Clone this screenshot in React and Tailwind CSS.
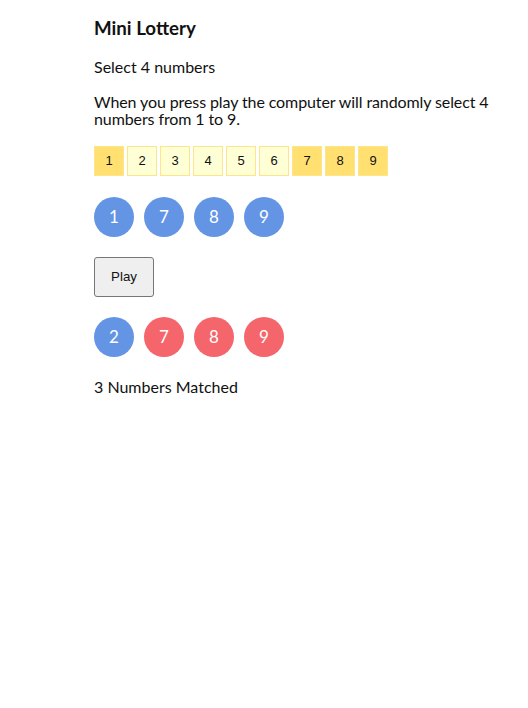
import React, { useState } from 'react';

const picked = [1, 7, 8, 9];
const drawn = [2, 7, 8, 9];

export default function App() {
  const [selected] = useState(picked);

  return (
    <div className="min-h-[708px] bg-white text-[#111] font-['Lato','Noto_Sans',sans-serif]">
      <div className="ml-[94px] w-[420px] pt-[17px]">
        <h1 className="text-[18.72px] font-bold leading-[22px]">Mini Lottery</h1>
        <p className="mt-[19px] text-base leading-[18px]">Select 4 numbers</p>
        <p className="mt-[17px] text-base leading-[17px] tracking-[-0.1px]">
          When you press play the computer will randomly select 4 numbers from 1 to 9.
        </p>

        {/* Number picker */}
        <div className="mt-[19px] flex gap-[3px]">
          {[1, 2, 3, 4, 5, 6, 7, 8, 9].map(n => (
            <button
              key={n}
              className={`w-[30px] h-[30px] border border-[#ffe58a] flex items-center justify-center text-[13px] font-['Liberation_Sans',Arial,sans-serif] text-[#111] ${
                selected.includes(n) ? 'bg-[#ffe070]' : 'bg-[#ffffd6]'
              }`}
            >
              {n}
            </button>
          ))}
        </div>

        {/* Chosen */}
        <div className="mt-[21px] flex gap-[10px]">
          {selected.map(n => (
            <div key={n} className="w-10 h-10 rounded-full bg-[#6495e5] text-white flex items-center justify-center text-[17px]">
              {n}
            </div>
          ))}
        </div>

        <button className="mt-[20px] w-[60px] h-[40px] bg-[#efefef] border border-[#767676] rounded-[3px] text-[13.3px] text-[#111] font-['Liberation_Sans',Arial,sans-serif]">
          Play
        </button>

        {/* Result */}
        <div className="mt-[20px] flex gap-[10px]">
          {drawn.map(n => (
            <div
              key={n}
              className={`w-10 h-10 rounded-full text-white flex items-center justify-center text-[17px] ${
                selected.includes(n) ? 'bg-[#f4666b]' : 'bg-[#6495e5]'
              }`}
            >
              {n}
            </div>
          ))}
        </div>

        <p className="mt-[21px] text-base leading-[18px]">3 Numbers Matched</p>
      </div>
    </div>
  );
}
